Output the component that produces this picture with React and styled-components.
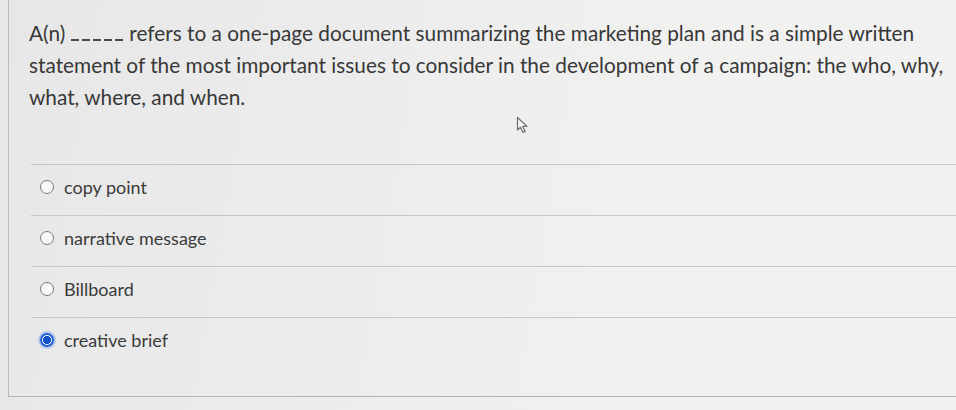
import React from 'react';
import styled, { createGlobalStyle } from 'styled-components';

const GlobalStyle = createGlobalStyle`
  html, body {
    margin: 0;
    padding: 0;
  }
  body {
    width: 956px;
    height: 410px;
    overflow: hidden;
    font-family: Lato, "Open Sans", sans-serif;
    background: linear-gradient(100deg, #e6e7e6 0%, #ececec 35%, #f1f1f0 70%, #f2f1f1 100%);
  }
`;

const Frame = styled.div`
  position: relative;
  box-sizing: border-box;
  height: 397px;
  margin-left: 8px;
  border-left: 1px solid #b9bab9;
  border-bottom: 1px solid #b4b5b4;
`;

const Question = styled.p`
  margin: 0;
  padding: 17px 0 0 20px;
  font-size: 20.8px;
  line-height: 32px;
  color: #383838;
  white-space: nowrap;
`;

const Blank = styled.span`
  display: inline-block;
  width: 52px;
  height: 2px;
  margin: 0 6px 0 6px;
  background: repeating-linear-gradient(90deg, #4a4a4a 0 8px, transparent 8px 11px);
  vertical-align: 0;
`;

const Options = styled.ul`
  list-style: none;
  margin: 51px 0 0 22px;
  padding: 0;
`;

const Option = styled.li`
  box-sizing: border-box;
  height: 51px;
  padding: 0 0 6px 9px;
  display: flex;
  align-items: center;
  gap: 10px;
  border-top: 1px solid #c6c7c6;
  font-size: 18px;
  color: #3b3b3b;
`;

const Radio = styled.span`
  box-sizing: border-box;
  width: 14px;
  height: 14px;
  border-radius: 50%;
  flex-shrink: 0;
  border: ${(p) => (p.$checked ? '2px solid #1d5fd6' : '1.5px solid #7a7a7a')};
  background: ${(p) =>
    p.$checked ? 'radial-gradient(circle, #1450c8 0 3.8px, #ffffff 4.2px)' : '#f7f7f7'};
  box-shadow: ${(p) => (p.$checked ? '0 0 0 2px rgba(120, 160, 235, 0.45)' : 'none')};
`;

const Cursor = styled.svg`
  position: absolute;
  left: 507px;
  top: 116px;
`;

const options = [
  { label: 'copy point' },
  { label: 'narrative message' },
  { label: 'Billboard' },
  { label: 'creative brief', checked: true },
];

export default function App() {
  return (
    <>
      <GlobalStyle />
      <Frame>
        <Question>
          A(n)
          <Blank />
          refers to a one-page document summarizing the marketing plan and is a simple written
          <br />
          statement of the most important issues to consider in the development of a campaign: the who, why,
          <br />
          what, where, and when.
        </Question>
        <Cursor width="14" height="18" viewBox="0 0 14 18">
          <path
            d="M1.5 1.5 L1.5 14 L4.5 11.2 L7 16.5 L9.2 15.5 L6.8 10.4 L11 10.4 Z"
            fill="#f4f4f4"
            stroke="#6e6e6e"
            strokeWidth="1.2"
            strokeLinejoin="round"
          />
        </Cursor>
        <Options>
          {options.map((o) => (
            <Option key={o.label}>
              <Radio $checked={o.checked} />
              {o.label}
            </Option>
          ))}
        </Options>
      </Frame>
    </>
  );
}
